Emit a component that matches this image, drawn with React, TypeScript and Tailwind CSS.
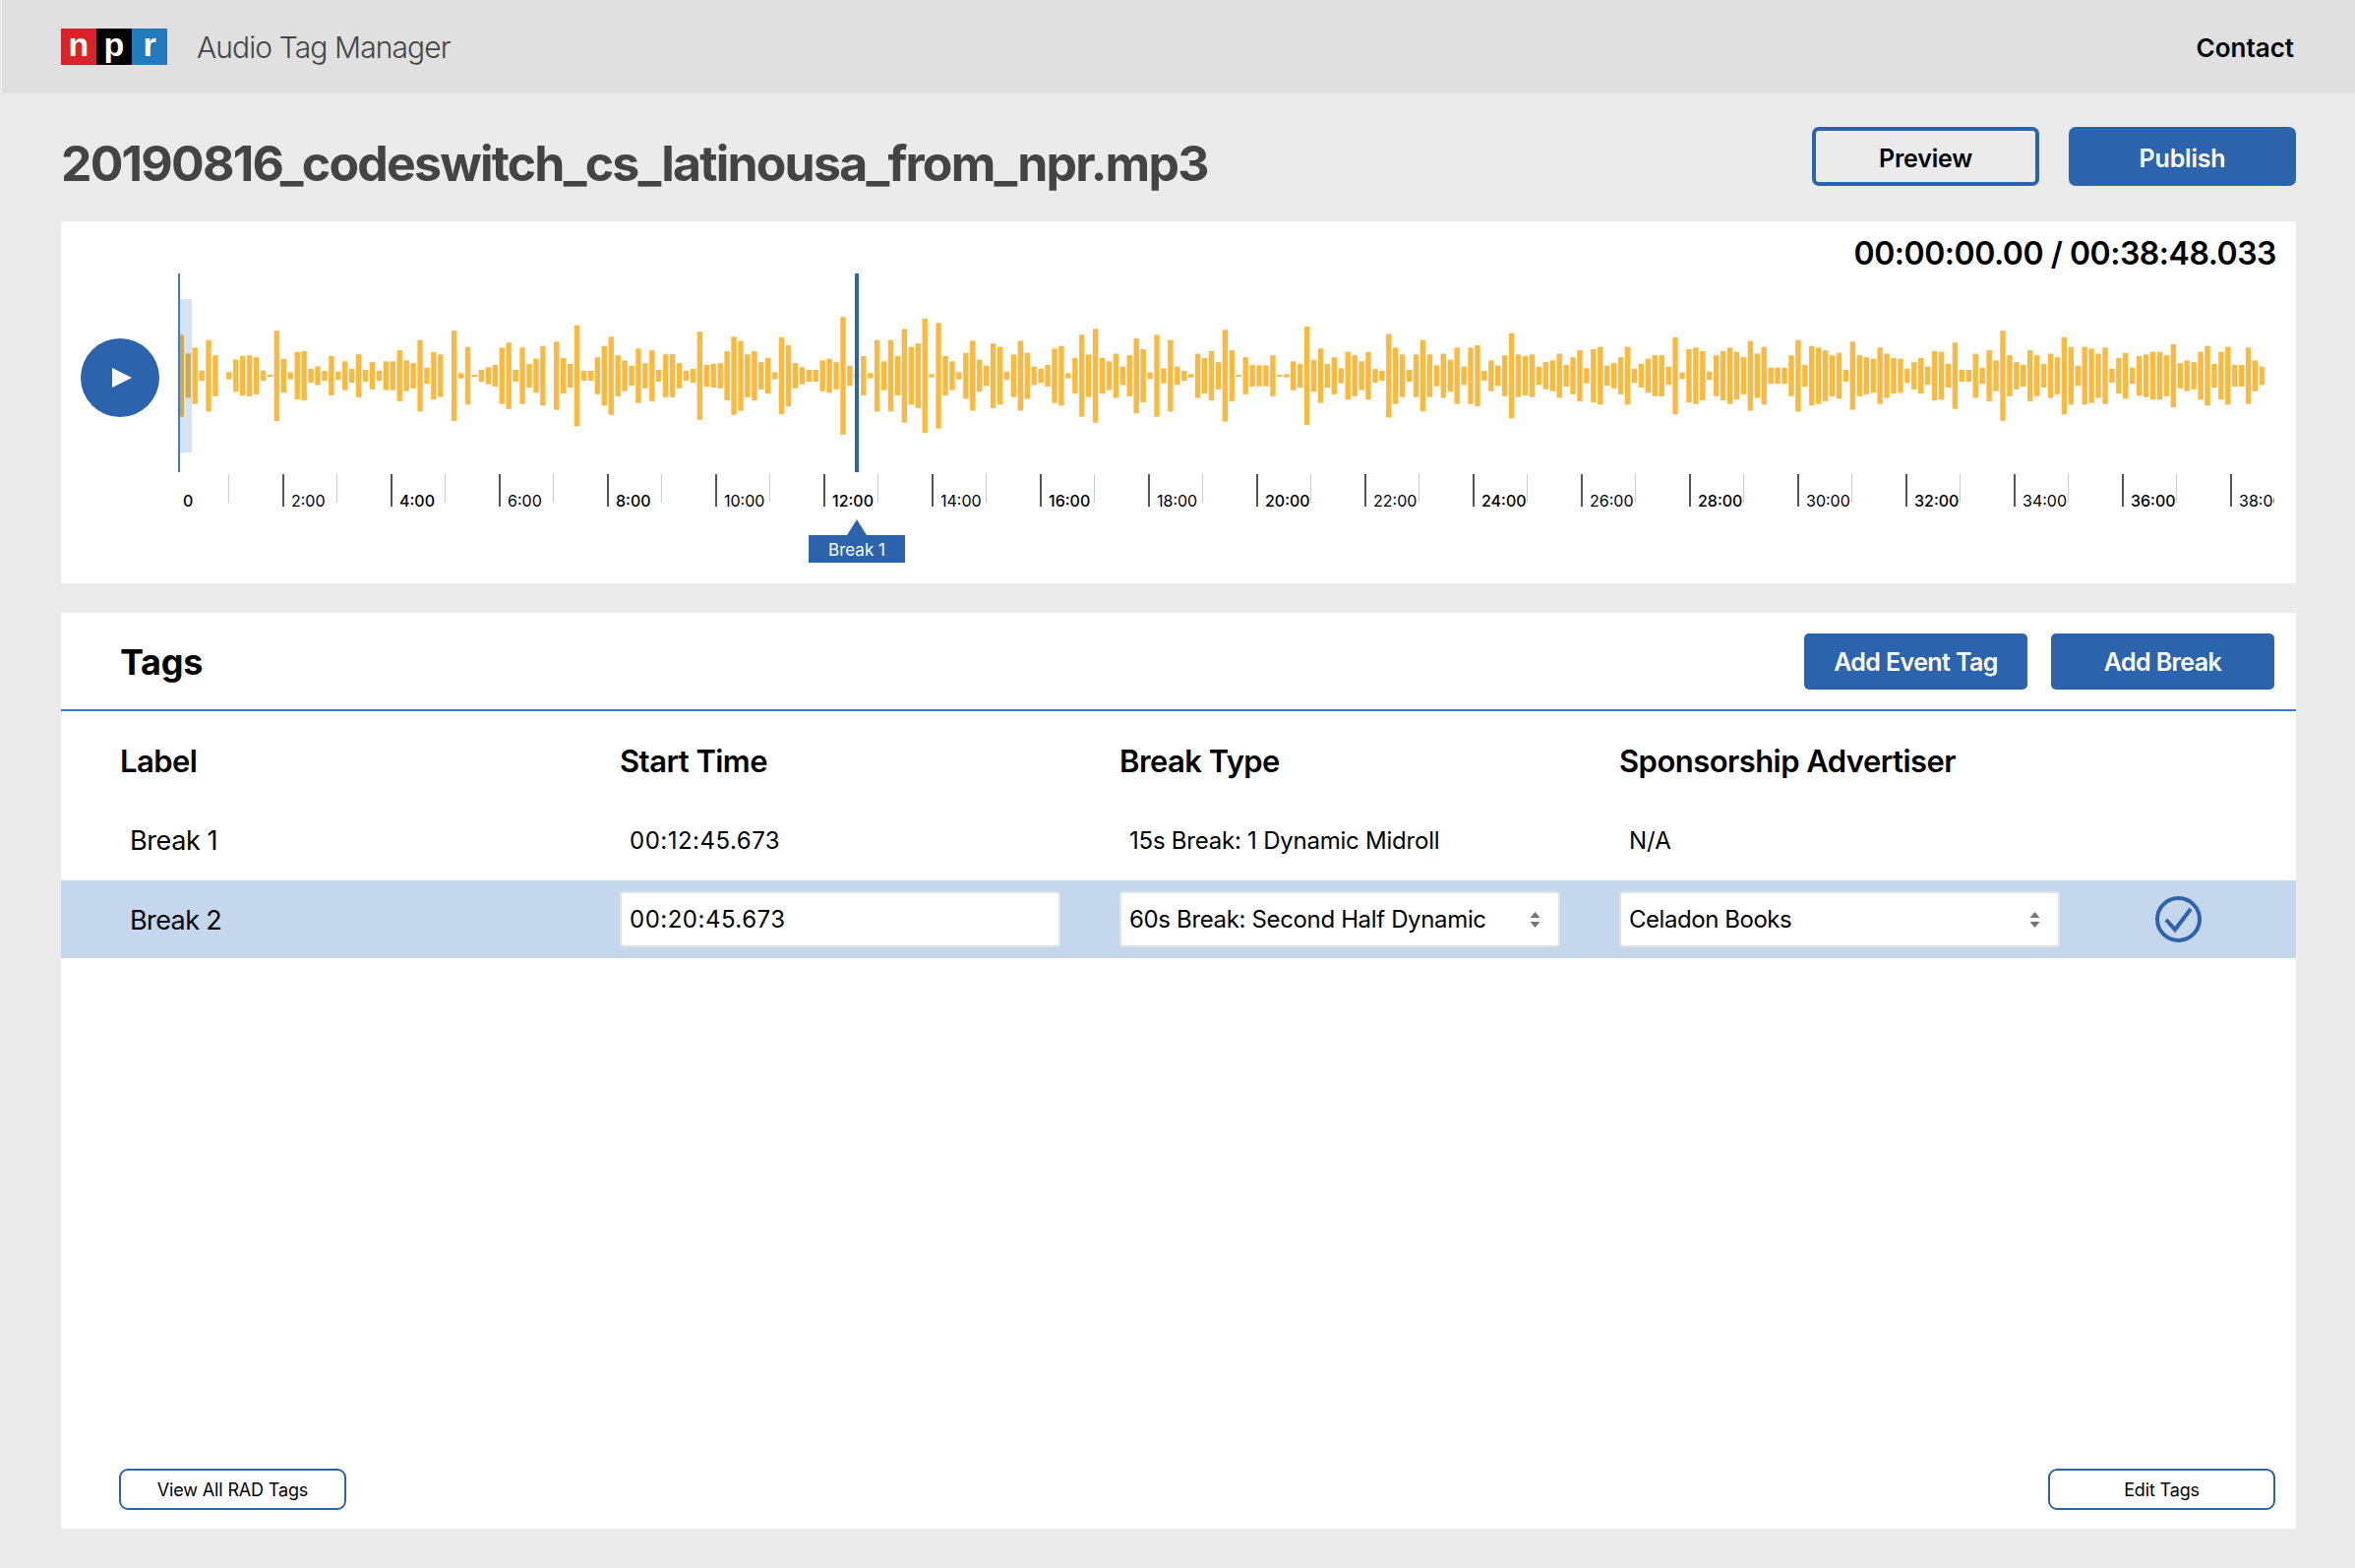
import React from 'react';

// waveform bar heights, left to right, in px * 3
const WAVE = [
  250, 135, 172, 31, 218, 125, 0, 22, 99, 121, 125, 113, 30, 6, 275, 103, 22, 145, 150, 42, 57, 30, 120, 26, 88, 42,
  131, 36, 83, 30, 88, 88, 155, 94, 77, 218, 50, 145, 130, 0, 275, 16, 176, 6, 36, 52, 66, 172, 202, 36, 172, 72, 104,
  182, 0, 208, 108, 72, 307, 30, 30, 113, 182, 238, 125, 93, 61, 166, 77, 155, 36, 131, 131, 77, 30, 42, 269, 66, 72,
  77, 150, 238, 213, 131,
  150, 83, 108, 22, 234, 186, 77, 52, 36, 36, 94, 104, 83, 359, 62, 6, 120, 16, 218, 88, 218, 120, 286, 176, 197, 348,
  10, 322, 120, 88, 22, 140, 213, 98, 62, 197, 176, 26, 130, 213, 140, 56, 42, 66, 166, 182, 16, 108, 250, 130, 286,
  108, 88, 135, 56, 125, 228, 162, 20, 250, 46, 218, 56, 30, 10, 135, 108, 150, 83, 280, 155, 6, 113, 66, 64, 64, 125,
  6, 10, 88, 72, 300, 98, 166, 72, 113, 46, 146, 125, 88, 146, 42, 30, 255, 172, 130, 36, 130, 218, 130,
  64, 135, 98, 172, 56, 172, 186, 30, 94, 62, 125, 259, 130, 120, 130, 56, 83, 94, 135, 66, 113, 155, 46, 162, 176, 62,
  77, 113, 176, 42, 72, 104, 125, 125, 56, 234, 20, 162, 172, 150, 26, 125, 150, 172, 146, 113, 213, 135, 176, 50, 50,
  50, 125, 218, 66, 182, 172, 155, 125, 140, 36, 208, 125, 113, 104, 172, 135, 108, 104, 42, 83, 108, 56, 150, 146, 72,
  202, 36, 36, 135, 50, 155, 94, 275, 125, 83, 66, 155, 125, 72, 135, 113, 234, 176, 62, 176, 166, 135, 172, 42, 108,
  140, 50, 120, 130, 146, 146, 125, 192, 77, 94, 83, 146, 182, 72, 146, 176, 66, 66, 172, 94, 56,
];

const TICKS = Array.from({ length: 20 }, (_, i) => i * 2);

const Waveform: React.FC = () => {
  const step = (2117.5 - 2.3) / (WAVE.length - 1);
  return (
    <svg width="2130" height="202" viewBox="0 0 2130 202" className="relative block">
      {WAVE.map((h, i) => (
        <rect
          key={i}
          x={2.3 + i * step - 2.7}
          y={104 - h / 6}
          width="5.4"
          height={h / 3}
          fill={i < 2 ? '#cfab4a' : '#fbb93f'}
        />
      ))}
    </svg>
  );
};

const Stepper: React.FC = () => (
  <svg width="11" height="16" viewBox="0 0 11 16" className="shrink-0">
    <path d="M5.5 0 L10.5 6 H0.5 Z M5.5 16 L10.5 10 H0.5 Z" fill="#757575" />
  </svg>
);

const SelectBox: React.FC<{ value: string; tracking: string }> = ({ value, tracking }) => (
  <div className="w-[448px] h-[57px] flex items-center justify-between pl-[8px] pr-[18px] bg-white border-2 border-[#dfe3e8] rounded-[4px] text-[24px] text-black">
    <span className={`pt-[1px] ${tracking}`}>{value}</span>
    <Stepper />
  </div>
);

const App: React.FC = () => {
  return (
    <div className="w-[2394px] h-[1594px] bg-[#ebebeb] overflow-hidden font-['Inter',sans-serif]">
      {/* Top bar */}
      <div className="ml-[2px] h-[95px] bg-[#e0e0e0] flex items-center justify-between pl-[60px] pr-[62px]">
        <div className="flex items-center gap-[30px]">
          <div className="flex h-[37px] font-['Liberation_Sans',sans-serif] font-bold text-[34px] leading-[32px] text-white">
            <div className="w-[36px] bg-[#d8232a] text-center">n</div>
            <div className="w-[36px] bg-black text-center">p</div>
            <div className="w-[36px] bg-[#237bbd] text-center">r</div>
          </div>
          <span className="pt-[2px] text-[30px] font-light tracking-[-0.9px] text-[#444444]">Audio Tag Manager</span>
        </div>
        <span className="pt-[1px] text-[26px] font-semibold text-black">Contact</span>
      </div>

      <div className="pl-[62px] pr-[60px]">
        {/* File title and actions */}
        <div className="h-[130px] flex items-start justify-between">
          <h1 className="mt-[33px] text-[50px] leading-[76px] font-bold tracking-[-1.8px] text-[#444444]">
            20190816_codeswitch_cs_latinousa_from_npr.mp3
          </h1>
          <div className="mt-[34px] flex gap-[30px]">
            <button className="w-[231px] h-[60px] pt-[5px] border-4 border-[#2c63ad] rounded-[7px] text-[25px] font-semibold tracking-[-0.2px] text-black">
              Preview
            </button>
            <button className="w-[231px] h-[60px] pt-[5px] bg-[#2c63ad] rounded-[7px] text-[25px] font-semibold tracking-[-0.2px] text-white">
              Publish
            </button>
          </div>
        </div>

        {/* Player */}
        <div className="relative h-[368px] bg-white flex pl-[20px] pr-[24px]">
          <span className="absolute right-[20px] top-[12px] text-[32px] leading-[42px] font-semibold tracking-[-0.47px] text-black">
            00:00:00.00 / 00:38:48.033
          </span>
          <button className="mt-[119px] w-[80px] h-[80px] shrink-0 rounded-full bg-[#2c63ad] flex items-center justify-center">
            <svg width="20" height="20" viewBox="0 0 20 20" className="ml-[3px]">
              <path d="M0 0 L20 10 L0 20 Z" fill="#ffffff" />
            </svg>
          </button>
          <div className="relative ml-[20px] w-[2130px] pt-[53px]">
            <div className="relative h-[202px]">
              <div className="absolute left-0 top-[26px] w-[13px] h-[156px] bg-[#d5e3f4]" />
              <Waveform />
              <div className="absolute left-[-1px] top-0 w-[2px] h-[202px] bg-[#3d7bd0]" />
              <div className="absolute left-[687px] top-0 w-[4px] h-[202px] bg-[#2c63ad]" />
            </div>
            {/* Timeline */}
            <div className="mt-[2px] ml-[-5px] flex overflow-hidden">
              {TICKS.map((m) => (
                <div key={m} className="relative w-[110px] h-[40px] shrink-0">
                  {m > 0 && <div className="absolute left-0 top-0 w-[2px] h-[33px] bg-[#555555]" />}
                  <div className="absolute left-[55px] top-0 w-[1px] h-[29px] bg-[#cccccc]" />
                  <span
                    className={`absolute left-[9px] top-[19px] text-[16px] leading-[16px] text-black ${
                      m % 4 === 0 ? 'font-medium' : 'font-normal'
                    }`}
                  >
                    {m === 0 ? '0' : `${m}:00`}
                  </span>
                </div>
              ))}
            </div>
            {/* Break marker */}
            <div className="absolute left-[640px] top-[303px] w-[98px] flex flex-col items-center">
              <svg width="20" height="16" viewBox="0 0 20 16" className="block">
                <path d="M10 0 L20 16 H0 Z" fill="#2c63ad" />
              </svg>
              <div className="w-full h-[28px] pt-[1px] bg-[#2c63ad] text-white text-[17px] leading-[28px] text-center">
                Break 1
              </div>
            </div>
          </div>
        </div>

        {/* Tags */}
        <div className="mt-[30px] h-[931px] bg-white flex flex-col">
          <div className="h-[100px] flex items-center justify-between pl-[60px] pr-[22px] border-b-2 border-[#3d7bd0]">
            <h2 className="pt-[2px] text-[36px] font-bold tracking-[-0.3px] text-black">Tags</h2>
            <div className="flex gap-[24px]">
              <button className="w-[227px] h-[57px] pt-[4px] bg-[#2c63ad] rounded-[5px] text-[25px] font-semibold tracking-[-0.6px] text-white">
                Add Event Tag
              </button>
              <button className="w-[227px] h-[57px] pt-[4px] bg-[#2c63ad] rounded-[5px] text-[25px] font-semibold tracking-[-0.6px] text-white">
                Add Break
              </button>
            </div>
          </div>

          <div className="grid grid-cols-[508px_508px_508px_1fr] pl-[60px] h-[102px] items-center text-[31px] font-semibold tracking-[-0.55px] text-black">
            <div>Label</div>
            <div>Start Time</div>
            <div>Break Type</div>
            <div>Sponsorship Advertiser</div>
          </div>

          <div className="grid grid-cols-[508px_508px_508px_1fr] pl-[60px] h-[70px] pb-[10px] items-center text-[24px] text-black">
            <div className="pl-[10px] text-[27px] tracking-[-0.4px]">Break 1</div>
            <div className="pl-[10px] tracking-[0.5px]">00:12:45.673</div>
            <div className="pl-[10px] tracking-[-0.23px]">15s Break: 1 Dynamic Midroll</div>
            <div className="pl-[10px]">N/A</div>
          </div>

          <div className="grid grid-cols-[508px_508px_508px_1fr] pl-[60px] h-[79px] items-center bg-[#c5d7ed] text-[24px] text-black">
            <div className="pl-[10px] pt-[3px] text-[27px] tracking-[-0.6px]">Break 2</div>
            <div className="w-[448px] h-[57px] flex items-center pl-[8px] pt-[1px] bg-white border-2 border-[#dfe3e8] rounded-[4px] tracking-[0.5px]">
              00:20:45.673
            </div>
            <SelectBox value="60s Break: Second Half Dynamic" tracking="tracking-[-0.35px]" />
            <div className="flex items-center">
              <SelectBox value="Celadon Books" tracking="tracking-[-0.45px]" />
              <svg width="47" height="47" viewBox="0 0 47 47" className="ml-[97px]">
                <circle cx="23.5" cy="23.5" r="21.5" fill="none" stroke="#2c63ad" strokeWidth="4" />
                <path d="M11 24 L20 34 L36 13" fill="none" stroke="#2c63ad" strokeWidth="4" />
              </svg>
            </div>
          </div>

          <div className="mt-auto mb-[19px] flex justify-between pl-[59px] pr-[21px]">
            <button className="w-[231px] h-[42px] pt-[1px] border-2 border-[#2c63ad] rounded-[9px] text-[18px] tracking-[-0.15px] text-black">
              View All RAD Tags
            </button>
            <button className="w-[231px] h-[42px] pt-[1px] border-2 border-[#2c63ad] rounded-[9px] text-[18px] tracking-[-0.15px] text-black">
              Edit Tags
            </button>
          </div>
        </div>
      </div>
    </div>
  );
};

export default App;
